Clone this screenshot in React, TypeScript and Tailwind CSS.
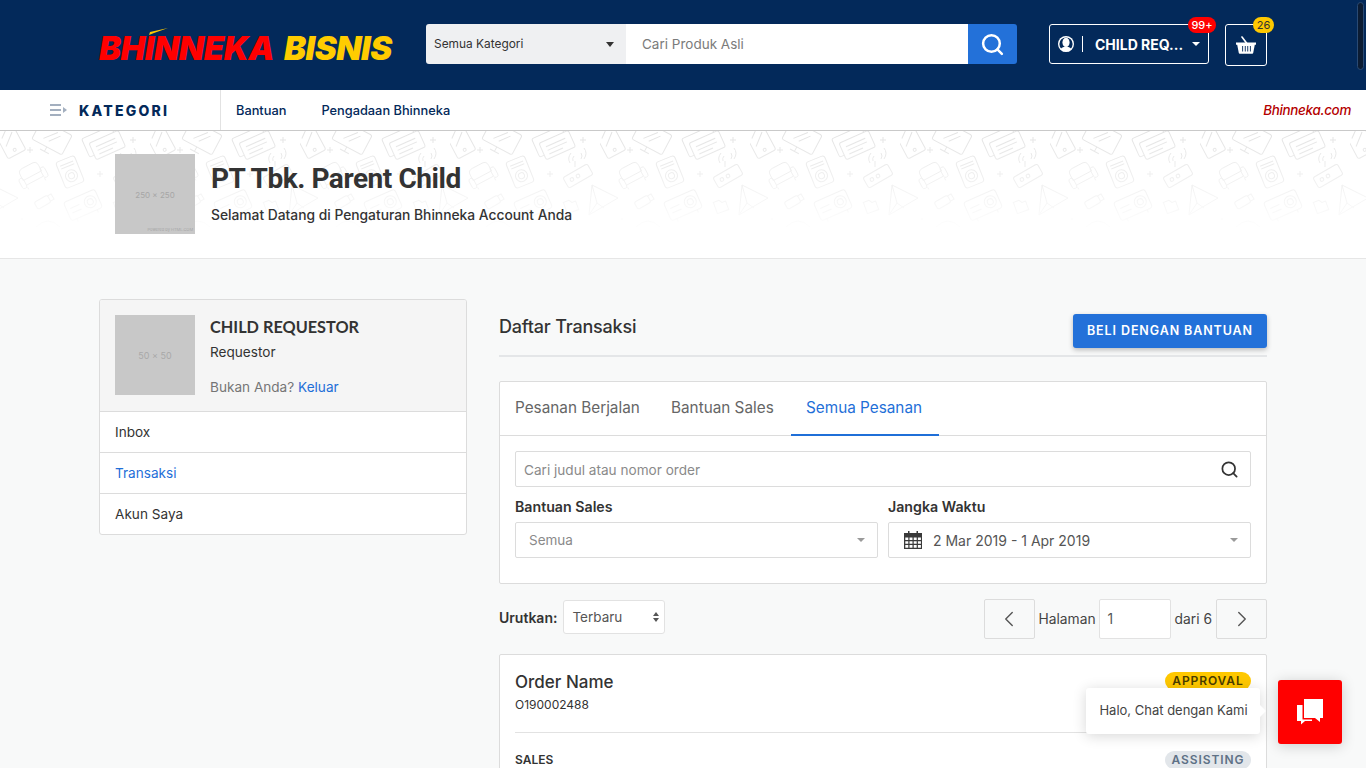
import { ChevronLeft, ChevronRight, Search } from 'lucide-react';

const menuItems = [
  { label: 'Inbox', active: false },
  { label: 'Transaksi', active: true },
  { label: 'Akun Saya', active: false },
];

const tabs = [
  { label: 'Pesanan Berjalan', width: 'w-[156px]', active: false },
  { label: 'Bantuan Sales', width: 'w-[135px]', active: false },
  { label: 'Semua Pesanan', width: 'w-[148px]', active: true },
];

function HeroPattern() {
  const triangle = 'M-8 -15 L18 -2 L-11 15 Z M-8 -15 L-3 3 L-11 15 M-3 3 L4 8';
  return (
    <svg className="absolute inset-0 h-full w-full" aria-hidden="true">
      <defs>
        <pattern id="hero-icons" x="0" y="0" width="150" height="127" patternUnits="userSpaceOnUse">
          <g fill="none" stroke="#e3e3e3" strokeWidth="1">
            {/* tablet */}
            <g transform="translate(10 10) rotate(-28)">
              <rect x="-10" y="-17" width="20" height="32" rx="2" />
              <path d="M-6 -6 L3 -13 M-6 3 L6 -7" />
              <circle cx="0" cy="10" r="1.5" />
            </g>
            {/* monitor */}
            <g transform="translate(51 8) rotate(28)">
              <rect x="-17" y="-13" width="34" height="22" rx="2" />
              <path d="M-7 3 L3 -9 M-1 3 L7 -7 M-5 14 H5 M0 9 V14" />
            </g>
            {/* cards */}
            <g transform="translate(102 12) rotate(-24)">
              <rect x="-17" y="-12" width="32" height="20" rx="2" />
              <rect x="-12" y="-5" width="32" height="18" rx="2" fill="#fff" />
              <path d="M-7 1 H14 M-7 5 H14 M-7 9 H8" />
            </g>
            <path d="M30 16 V22 M27 19 H33 M133 6 V12 M130 9 H136" />
            {/* sofa */}
            <g transform="translate(32 44) rotate(-28) scale(0.8)">
              <path d="M-13 -7 Q-13 -13 -7 -13 H7 Q13 -13 13 -7 V1 H-13 Z" />
              <rect x="-18" y="-3" width="6" height="14" rx="3" />
              <rect x="12" y="-3" width="6" height="14" rx="3" />
              <path d="M-12 8 H12 M-12 11 V14 M12 11 V14" />
            </g>
            {/* camera case */}
            <g transform="translate(70 41) rotate(-22)">
              <rect x="-10" y="-14" width="20" height="28" rx="3" />
              <circle cx="0" cy="4" r="6" />
              <circle cx="0" cy="4" r="3" />
              <path d="M-7 -9 H7 M-7 -6 H7" />
            </g>
            <path d="M100 40 V46 M97 43 H103" />
            {/* router */}
            <g transform="translate(128 45) rotate(-30)">
              <rect x="-14" y="-6" width="28" height="12" rx="2" />
              <circle cx="-7" cy="0" r="1.8" />
              <circle cx="0" cy="0" r="1.8" />
            </g>
            <path d="M125 36 V30 M120 32 Q117 27 121 22 M123 30 Q122 27 124 25 M131 28 Q133 25 131 22 M134 28 Q138 22 134 17" />
            {/* triangle, wraps over the tile edge */}
            <path transform="translate(0 69)" d={triangle} />
            <path transform="translate(150 69)" d={triangle} />
            {/* usb */}
            <g transform="translate(43 71) rotate(-30)">
              <rect x="-8" y="-4" width="15" height="8" rx="2" />
              <path d="M7 -3 H11 V3 H7" />
            </g>
            {/* projector */}
            <g transform="translate(83 74) rotate(-24)">
              <rect x="-17" y="-10" width="34" height="20" rx="3" />
              <circle cx="8" cy="0" r="6" />
              <circle cx="8" cy="0" r="3" />
              <path d="M-13 -2 H-3 M-13 3 H-3 M-11 10 V13 M11 10 V13" />
            </g>
            {/* folder */}
            <g transform="translate(121 75) rotate(-20)">
              <path d="M-6 -6 H0 L2 -3 H6 V6 H-6 Z" />
            </g>
            <path d="M36 96 Q48 84 60 96 M22 87 V89" />
          </g>
        </pattern>
      </defs>
      <rect width="100%" height="100%" fill="url(#hero-icons)" />
    </svg>
  );
}

function BasketIcon() {
  return (
    <svg width="20" height="18" viewBox="0 0 20 18" fill="none">
      <path d="M10.5 7 L6 1" stroke="#fff" strokeWidth="1.6" strokeLinecap="round" />
      <path
        fill="#fff"
        fillRule="evenodd"
        d="M0 6.5h20v2.2h-1.2L17.2 17a1 1 0 0 1-1 .8H3.8a1 1 0 0 1-1-.8L1.2 8.7H0zM6.2 10v5.5h.9V10zm2.6 0v5.5h.9V10zm2.5 0v5.5h.9V10zm2.6 0v5.5h.9V10z"
      />
    </svg>
  );
}

function UserIcon() {
  return (
    <svg width="16" height="16" viewBox="0 0 16 16">
      <circle cx="8" cy="8" r="8" fill="#fff" />
      <circle cx="8" cy="8" r="6.6" fill="#03295a" />
      <ellipse cx="8" cy="6.4" rx="3.6" ry="4.6" fill="#fff" />
      <path d="M2.6 13.2 C3.6 11.2 6 10.4 8 10.4 S12.4 11.2 13.4 13.2 L11 15.5 H5 Z" fill="#fff" />
    </svg>
  );
}

function CalendarIcon() {
  return (
    <svg width="18" height="18" viewBox="0 0 18 18" fill="#3a3a3a">
      <path
        fillRule="evenodd"
        d="M4 0h1.5v2h7V0H14v2h4v16H0V2h4zM1.3 6.5v2.6h3V6.5zm4.2 0v2.6h3V6.5zm4.2 0v2.6h3V6.5zm4.2 0v2.6h3V6.5zM1.3 10.2v2.6h3v-2.6zm4.2 0v2.6h3v-2.6zm4.2 0v2.6h3v-2.6zm4.2 0v2.6h3v-2.6zM1.3 14v2.7h3V14zm4.2 0v2.7h3V14zm4.2 0v2.7h3V14zm4.2 0v2.7h3V14z"
      />
    </svg>
  );
}

function ChatIcon() {
  return (
    <svg className="ml-px" width="28" height="28" viewBox="0 0 28 28" fill="#fff">
      <path d="M7 1 H26 V20 H23 V24 L18 20 H7 Z" />
      <path d="M0 7 H5.5 V21.5 H15 V23 H8 L4 26.5 V23 H0 Z" />
    </svg>
  );
}

function Placeholder({ label, powered }: { label: string; powered?: boolean }) {
  return (
    <div className="relative flex h-20 w-20 shrink-0 items-center justify-center bg-[#c8c8c8]">
      <span className={powered ? 'mt-[2px] text-[8px] text-[#a6a6a6]' : 'mt-[2px] text-[9px] text-[#a8a8a8]'}>{label}</span>
      {powered && (
        <span className="absolute right-[2px] bottom-[1px] text-[4px] leading-[6px] text-[#a6a6a6]">
          Powered by HTML.COM
        </span>
      )}
    </div>
  );
}

function Caret() {
  return <span className="h-0 w-0 border-x-[4px] border-t-[4px] border-x-transparent border-t-[#9a9a9a]" />;
}

export default function App() {
  return (
    <div className="relative h-[768px] overflow-hidden bg-[#f8f9f9] font-['Inter',sans-serif] text-[#333]">
      {/* top bar */}
      <header className="flex h-[90px] items-start bg-[#03295a] pt-6 pl-[99px]">
        <div className="relative flex h-12 w-[327px] whitespace-nowrap text-[33px] leading-[48px] font-black italic tracking-[-0.5px]">
          <span className="text-[#ff0000]">BHINNEKA</span>
          <span className="ml-[10px] text-[#ffcc00]">BISNIS</span>
          <svg className="absolute top-[4px] left-[50px]" width="20" height="8" viewBox="0 0 20 8">
            <path d="M0 7 L1 4 L19 0 L5 5 Z" fill="#ffcc00" />
          </svg>
        </div>
        <div className="flex h-10 w-[591px] overflow-hidden rounded-[3px]">
          <div className="flex w-[200px] items-center justify-between bg-[#eff0f2] pr-[12px] pl-2 text-[11.9px] text-[#333]">
            <span>Semua Kategori</span>
            <span className="h-0 w-0 border-x-[4.5px] border-t-[5px] border-x-transparent border-t-[#333]" />
          </div>
          <div className="flex flex-1 items-center bg-white pt-px pl-4 text-[13.5px] text-[#7b7b7b]">Cari Produk Asli</div>
          <div className="flex w-[49px] items-center justify-center bg-[#2371d9]">
            <Search size={25} color="#fff" strokeWidth={2.4} />
          </div>
        </div>
        <div className="relative ml-8 flex h-10 w-40 items-center rounded-[3px] border border-white pl-2">
          <UserIcon />
          <span className="mr-[12px] ml-2 h-4 w-px bg-white" />
          <span className="text-[14px] font-bold text-white">CHILD REQ...</span>
          <span className="ml-[9px] h-0 w-0 border-x-[4px] border-t-[4px] border-x-transparent border-t-white" />
          <span className="absolute -top-[8px] right-[-8px] flex h-[16px] w-7 items-center justify-center rounded-full bg-[#ff0000] text-[11px] font-medium text-white">
            99+
          </span>
        </div>
        <div className="relative ml-4 flex h-[42px] w-[42px] items-center justify-center rounded-[3px] border border-white">
          <BasketIcon />
          <span className="absolute -top-[8px] right-[-8px] flex h-[16px] w-[21px] items-center justify-center rounded-full bg-[#ffc800] text-[11px] text-[#333]">
            26
          </span>
        </div>
      </header>
      {/* overlay scrollbar */}
      <div className="absolute top-[2px] right-[2px] h-[68px] w-[7px] rounded-full border border-[#2a4a74] bg-[#0c1c33]" />

      {/* nav */}
      <nav className="flex h-[41px] items-stretch border-b border-[#c9c9c9] bg-white text-[12.8px] font-medium text-[#03295a]">
        <div className="flex w-[221px] items-center border-r border-[#e2e2e2] pl-[50px]">
          <svg width="17" height="12" viewBox="0 0 17 12" fill="#a3afbf">
            <rect y="0" width="11" height="2" />
            <rect y="5" width="11" height="2" />
            <rect y="10" width="11" height="2" />
            <path d="M13 3 L17 6 L13 9 Z" />
          </svg>
          <span className="ml-[12px] text-[14px] font-extrabold tracking-[2.2px]">KATEGORI</span>
        </div>
        <div className="flex items-center pt-px pl-[15px]">Bantuan</div>
        <div className="flex items-center pt-px pl-[35px]">Pengadaan Bhinneka</div>
        <div className="ml-auto flex items-center pr-[15px] text-[13.4px] font-medium tracking-[-0.3px] text-[#b40000] italic">
          Bhinneka.com
        </div>
      </nav>

      {/* hero */}
      <section className="relative h-[128px] overflow-hidden border-b border-[#e6e6e6] bg-white">
        <HeroPattern />
        <div className="absolute inset-0 bg-linear-to-b from-transparent to-white to-80%" />
        <div className="relative flex items-start pt-[23px] pl-[115px]">
          <Placeholder label="250 x 250" powered />
          <div className="ml-4 pt-[7px]">
            <h1 className="font-['Roboto',sans-serif] text-[28px] leading-[36px] font-bold tracking-[-0.45px] text-[#333]">
              PT Tbk. Parent Child
            </h1>
            <p className="mt-2 text-[13.8px] leading-5 font-medium text-[#333]">
              Selamat Datang di Pengaturan Bhinneka Account Anda
            </p>
          </div>
        </div>
      </section>

      {/* content */}
      <main className="flex items-start gap-8 pt-10 pl-[99px]">
        <aside className="w-[368px] shrink-0 overflow-hidden rounded-[3px] border border-[#dcdcdc] bg-white">
          <div className="flex h-[112px] items-start border-b border-[#dcdcdc] bg-[#f5f5f5] pt-[15px] pl-[15px]">
            <Placeholder label="50 x 50" />
            <div className="ml-[15px]">
              <div className="font-['Lato',sans-serif] text-[16.3px] leading-6 font-bold text-[#333]">CHILD REQUESTOR</div>
              <div className="mt-[3px] text-[13.6px] leading-5 text-[#333]">Requestor</div>
              <div className="mt-[15px] text-[13.6px] leading-5 text-[#757575]">
                Bukan Anda? <span className="text-[#1f6fd8]">Keluar</span>
              </div>
            </div>
          </div>
          {menuItems.map((item, i) => (
            <div
              key={item.label}
              className={`flex items-center px-[15px] text-[13.6px] ${i > 0 ? 'h-[41px] border-t border-[#dcdcdc]' : 'h-10'} ${
                item.active ? 'text-[#1f6fd8]' : 'text-[#333]'
              }`}
            >
              {item.label}
            </div>
          ))}
        </aside>

        <div className="w-[768px] shrink-0">
          <div className="flex h-[58px] items-start justify-between border-b-2 border-[#e4e6e8] pt-[15px]">
            <h2 className="text-[18px] leading-[26px] font-medium tracking-[-0.2px] text-[#333]">Daftar Transaksi</h2>
            <button className="h-[34px] w-[194px] rounded-[3px] bg-[#2371d9] text-[12.5px] font-semibold tracking-[0.9px] text-white shadow-[0_2px_5px_rgba(0,0,0,0.25)]">
              BELI DENGAN BANTUAN
            </button>
          </div>

          <div className="mt-6 h-[203px] rounded-[2px] border border-[#dcdcdc] bg-white">
            <div className="flex h-[54px] border-b border-[#dcdcdc]">
              {tabs.map((tab) => (
                <div
                  key={tab.label}
                  className={`flex items-center pl-[15px] text-[15.3px] ${tab.width} ${
                    tab.active ? '-mb-px border-b-2 border-[#1f6fd8] text-[#1f6fd8]' : 'text-[#666]'
                  }`}
                >
                  {tab.label}
                </div>
              ))}
            </div>
            <div className="px-[15px] pt-[15px]">
              <div className="flex h-9 items-center justify-between rounded-[2px] border border-[#dcdcdc] pt-[2px] pr-[11px] pl-2 text-[13.6px] text-[#8a8a8a]">
                <span>Cari judul atau nomor order</span>
                <Search className="-mt-[2px]" size={19} color="#333" strokeWidth={2.2} />
              </div>
              <div className="mt-[11px] grid grid-cols-2 gap-[10px]">
                <div>
                  <div className="text-[14.2px] leading-[18px] font-semibold text-[#333]">Bantuan Sales</div>
                  <div className="mt-[6px] flex h-9 items-center justify-between rounded-[2px] border border-[#dcdcdc] pr-[12px] pl-[13px] text-[13.5px] text-[#8a8a8a]">
                    <span>Semua</span>
                    <Caret />
                  </div>
                </div>
                <div>
                  <div className="text-[14.2px] leading-[18px] font-semibold text-[#333]">Jangka Waktu</div>
                  <div className="mt-[6px] flex h-9 items-center justify-between rounded-[2px] border border-[#dcdcdc] pr-[12px] pl-[15px] text-[14px] text-[#555]">
                    <span className="flex items-center gap-[11px]">
                      <CalendarIcon />
                      2 Mar 2019 - 1 Apr 2019
                    </span>
                    <Caret />
                  </div>
                </div>
              </div>
            </div>
          </div>

          <div className="mt-[15px] flex items-start justify-between">
            <div className="flex items-center pt-px">
              <span className="text-[14px] font-semibold text-[#333]">Urutkan:</span>
              <div className="ml-[6px] flex h-[34px] w-[102px] items-center justify-between rounded-[3px] border border-[#e2e2e2] bg-white pr-[5px] pl-2 text-[13.5px] text-[#555]">
                <span>Terbaru</span>
                <span className="flex flex-col gap-[2px]">
                  <span className="h-0 w-0 border-x-[3px] border-b-[4px] border-x-transparent border-b-[#555]" />
                  <span className="h-0 w-0 border-x-[3px] border-t-[4px] border-x-transparent border-t-[#555]" />
                </span>
              </div>
            </div>
            <div className="flex items-center text-[13.8px] text-[#444]">
              <div className="flex h-10 w-[51px] items-center justify-center rounded-[2px] border border-[#dcdcdc] bg-[#f8f9f9]">
                <ChevronLeft size={26} color="#555" strokeWidth={1.3} />
              </div>
              <span className="ml-1">Halaman</span>
              <div className="ml-[3px] flex h-10 w-[72px] items-center rounded-[2px] border border-[#e2e2e2] bg-white pl-2 text-[#555]">
                1
              </div>
              <span className="ml-1">dari 6</span>
              <div className="ml-1 flex h-10 w-[51px] items-center justify-center rounded-[2px] border border-[#dcdcdc] bg-[#f8f9f9]">
                <ChevronRight size={26} color="#555" strokeWidth={1.3} />
              </div>
            </div>
          </div>

          <div className="mt-[15px] h-[200px] rounded-[2px] border border-[#dcdcdc] bg-white px-[15px] pt-[15px]">
            <div className="flex items-start justify-between border-b border-[#e2e2e2] pb-[19px]">
              <div>
                <div className="text-[17px] leading-6 font-medium text-[#333]">Order Name</div>
                <div className="mt-[3px] text-[12px] leading-4 text-[#333]">O190002488</div>
              </div>
              <span className="mt-[2px] flex h-[18px] w-[86px] items-center justify-center rounded-full bg-[#ffc800] text-[12px] font-semibold tracking-[0.9px] text-[#4a3d00]">
                APPROVAL
              </span>
            </div>
            <div className="flex items-center justify-between pt-[18px]">
              <span className="text-[12px] font-semibold text-[#333]">SALES</span>
              <span className="flex h-[18px] w-[86px] items-center justify-center rounded-full bg-[#e2e6ea] text-[12px] font-semibold tracking-[0.9px] text-[#5e7186]">
                ASSISTING
              </span>
            </div>
          </div>
        </div>
      </main>

      {/* chat */}
      <div className="absolute top-[688px] left-[1086px] flex h-[46px] w-[174px] items-center justify-center rounded-[3px] bg-white pl-px text-[13px] text-[#444] shadow-[0_2px_14px_rgba(0,0,0,0.16)]">
        Halo, Chat dengan Kami
        <span className="absolute top-[17px] right-[-6px] h-0 w-0 border-y-[6px] border-l-[6px] border-y-transparent border-l-white" />
      </div>
      <div className="absolute top-[680px] left-[1278px] flex h-16 w-16 items-center justify-center rounded-[3px] bg-[#ff0000] shadow-[0_2px_14px_rgba(0,0,0,0.18)]">
        <ChatIcon />
      </div>
    </div>
  );
}
